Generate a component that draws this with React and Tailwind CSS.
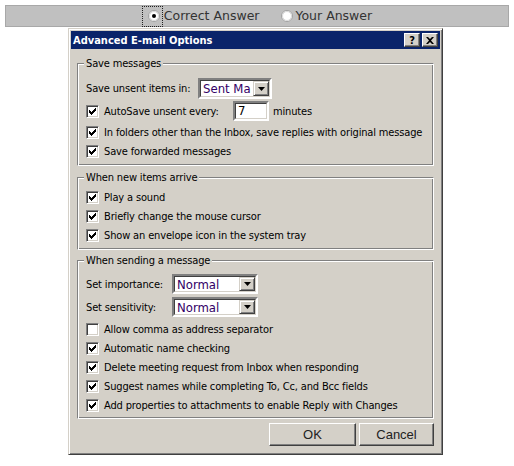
import React from "react";

const F = { fontFamily: "'DejaVu Sans Condensed','DejaVu Sans',sans-serif" };

function Check({ checked = true }) {
  return (
    <span className="inline-block w-[13px] h-[13px] shrink-0 bg-white border border-t-[#808080] border-l-[#808080] border-r-white border-b-white shadow-[inset_1px_1px_0_#404040,inset_-1px_-1px_0_#d4d0c8] relative">
      {checked && (
        <svg width="13" height="13" viewBox="0 0 13 13" className="absolute -left-px -top-px">
          <path d="M3 5h1v1h1v1h1V6h1V5h1V4h1V3h1v3H9v1H8v1H7v1H6v1H5V9H4V8H3z" fill="#000" />
        </svg>
      )}
    </span>
  );
}

function CheckRow({ label, checked = true }) {
  return (
    <div className="h-[19px] flex items-center gap-[5px]">
      <Check checked={checked} />
      <span className="text-[11px] tracking-[-0.15px] leading-none text-black whitespace-nowrap">{label}</span>
    </div>
  );
}

function DropBtn() {
  return (
    <span className="w-[16px] h-full shrink-0 bg-[#d4d0c8] border border-t-[#d4d0c8] border-l-[#d4d0c8] border-r-[#404040] border-b-[#404040] shadow-[inset_1px_1px_0_#fff,inset_-1px_-1px_0_#808080] flex items-center justify-center">
      <svg width="7" height="4" viewBox="0 0 7 4"><path d="M0 0h7L3.5 4z" fill="#000" /></svg>
    </span>
  );
}

function Select({ value, w, h = 20 }) {
  return (
    <span
      className="flex bg-white border-2 border-t-[#808080] border-l-[#808080] border-r-white border-b-white"
      style={{ width: w, height: h }}
    >
      <span className="flex-1 flex items-stretch border border-t-[#404040] border-l-[#404040] border-r-[#d4d0c8] border-b-[#d4d0c8] overflow-hidden">
        <span className="flex-1 flex items-center pl-[2px] text-[13px] leading-none text-[#330066] whitespace-nowrap overflow-hidden">{value}</span>
        <DropBtn />
      </span>
    </span>
  );
}

function Group({ title, className = "", children }) {
  return (
    <div className={"relative border border-t-[#808080] border-l-[#808080] border-r-white border-b-white shadow-[inset_1px_1px_0_#fff,inset_-1px_-1px_0_#808080] " + className}>
      <span className="absolute left-[6px] -top-[7px] px-[2px] bg-[#d4d0c8] text-[11px] tracking-[-0.15px] leading-[13px] text-black">{title}</span>
      {children}
    </div>
  );
}

function Button({ label, w }) {
  return (
    <div
      className="h-[23px] flex items-center justify-center bg-[#d4d0c8] border border-t-white border-l-white border-r-[#404040] border-b-[#404040] shadow-[inset_-1px_-1px_0_#808080] text-[13px] text-[#222]"
      style={{ width: w, fontFamily: "'Liberation Sans',Arial,sans-serif" }}
    >
      {label}
    </div>
  );
}

function Radio({ checked }) {
  return (
    <svg width="12" height="12" viewBox="0 0 12 12" className="shrink-0">
      <circle cx="6" cy="6" r="5.5" fill="#fff" stroke="#a0a0a0" strokeWidth="1" />
      <circle cx="6" cy="6" r="4.5" fill="#fff" stroke="#d8d8d8" strokeWidth="1" />
      {checked && <circle cx="6" cy="6" r="2" fill="#000" />}
    </svg>
  );
}

export default function App() {
  return (
    <div className="w-[514px] h-[466px] bg-white pt-[5px] overflow-hidden" style={F}>
      {/* top band */}
      <div className="mx-[5px] h-[22px] bg-[#c0c0c0] border border-[#a8a8a8] flex items-center justify-center text-[#333]" style={{ fontFamily: "'DejaVu Sans',sans-serif" }}>
        <div className="flex items-center">
          <span className="h-[21px] pl-[5px] pr-[2px] border border-dotted border-[#222] flex items-center">
            <Radio checked />
          </span>
          <span className="text-[12.5px] leading-none ml-px">Correct Answer</span>
          <span className="ml-[22px]"><Radio /></span>
          <span className="text-[12.5px] leading-none ml-[2px]">Your Answer</span>
        </div>
      </div>

      {/* dialog */}
      <div className="ml-[68px] mt-[1px] w-[375px] h-[427px] bg-[#d4d0c8] border border-t-[#d4d0c8] border-l-[#d4d0c8] border-r-[#404040] border-b-[#404040] shadow-[inset_1px_1px_0_#fff,inset_-1px_-1px_0_#808080] p-[2px] flex flex-col">
        <div className="h-[18px] bg-[#0a246a] flex items-center pl-[2px] pr-[2px]">
          <span className="flex-1 text-white font-bold text-[11px] leading-none">Advanced E-mail Options</span>
          <div className="flex gap-[2px]">
            <span className="w-[16px] h-[14px] bg-[#d4d0c8] border border-t-white border-l-white border-r-[#404040] border-b-[#404040] shadow-[inset_-1px_-1px_0_#808080] flex items-center justify-center text-[11px] font-bold leading-none text-black">?</span>
            <span className="w-[16px] h-[14px] bg-[#d4d0c8] border border-t-white border-l-white border-r-[#404040] border-b-[#404040] shadow-[inset_-1px_-1px_0_#808080] flex items-center justify-center">
              <svg width="8" height="7" viewBox="0 0 8 7"><path d="M0 0h2l2 2 2-2h2L5 3.5 8 7H6L4 5 2 7H0l3-3.5z" fill="#000" /></svg>
            </span>
          </div>
        </div>

        <div className="px-[6px] flex flex-col">
          <Group title="Save messages" className="mt-[14px] pt-[14px] pb-[4px] pl-[8px]">
            <div className="h-[21px] flex items-center">
              <span className="w-[112px] text-[11px] tracking-[-0.15px] leading-none text-black">Save unsent items in:</span>
              <Select value="Sent Ma" w={74} h={21} />
            </div>
            <div className="mt-[2px] h-[20px] flex items-center">
              <Check />
              <span className="ml-[5px] w-[129px] text-[11px] tracking-[-0.15px] leading-none text-black">AutoSave unsent every:</span>
              <span className="w-[36px] h-[20px] bg-white border-2 border-t-[#808080] border-l-[#808080] border-r-white border-b-white">
                <span className="block h-full border border-t-[#404040] border-l-[#404040] border-r-[#d4d0c8] border-b-[#d4d0c8] pl-[2px] text-[13px] leading-[14px] text-black">7</span>
              </span>
              <span className="ml-[4px] text-[11px] tracking-[-0.15px] leading-none text-black">minutes</span>
            </div>
            <div className="mt-[2px]">
              <CheckRow label="In folders other than the Inbox, save replies with original message" />
              <CheckRow label="Save forwarded messages" />
            </div>
          </Group>

          <Group title="When new items arrive" className="mt-[11px] pt-[10px] pb-[4px] pl-[8px]">
            <CheckRow label="Play a sound" />
            <CheckRow label="Briefly change the mouse cursor" />
            <CheckRow label="Show an envelope icon in the system tray" />
          </Group>

          <Group title="When sending a message" className="mt-[10px] pt-[13px] pb-[3px] pl-[8px]">
            <div className="h-[20px] flex items-center">
              <span className="w-[86px] text-[11px] tracking-[-0.15px] leading-none text-black">Set importance:</span>
              <Select value="Normal" w={86} />
            </div>
            <div className="mt-[3px] h-[20px] flex items-center">
              <span className="w-[86px] text-[11px] tracking-[-0.15px] leading-none text-black">Set sensitivity:</span>
              <Select value="Normal" w={86} />
            </div>
            <div className="mt-[3px]">
              <CheckRow label="Allow comma as address separator" checked={false} />
              <CheckRow label="Automatic name checking" />
              <CheckRow label="Delete meeting request from Inbox when responding" />
              <CheckRow label="Suggest names while completing To, Cc, and Bcc fields" />
              <CheckRow label="Add properties to attachments to enable Reply with Changes" />
            </div>
          </Group>

          <div className="mt-[4px] flex justify-end gap-[3px]">
            <Button label="OK" w={87} />
            <Button label="Cancel" w={75} />
          </div>
        </div>
      </div>
    </div>
  );
}
